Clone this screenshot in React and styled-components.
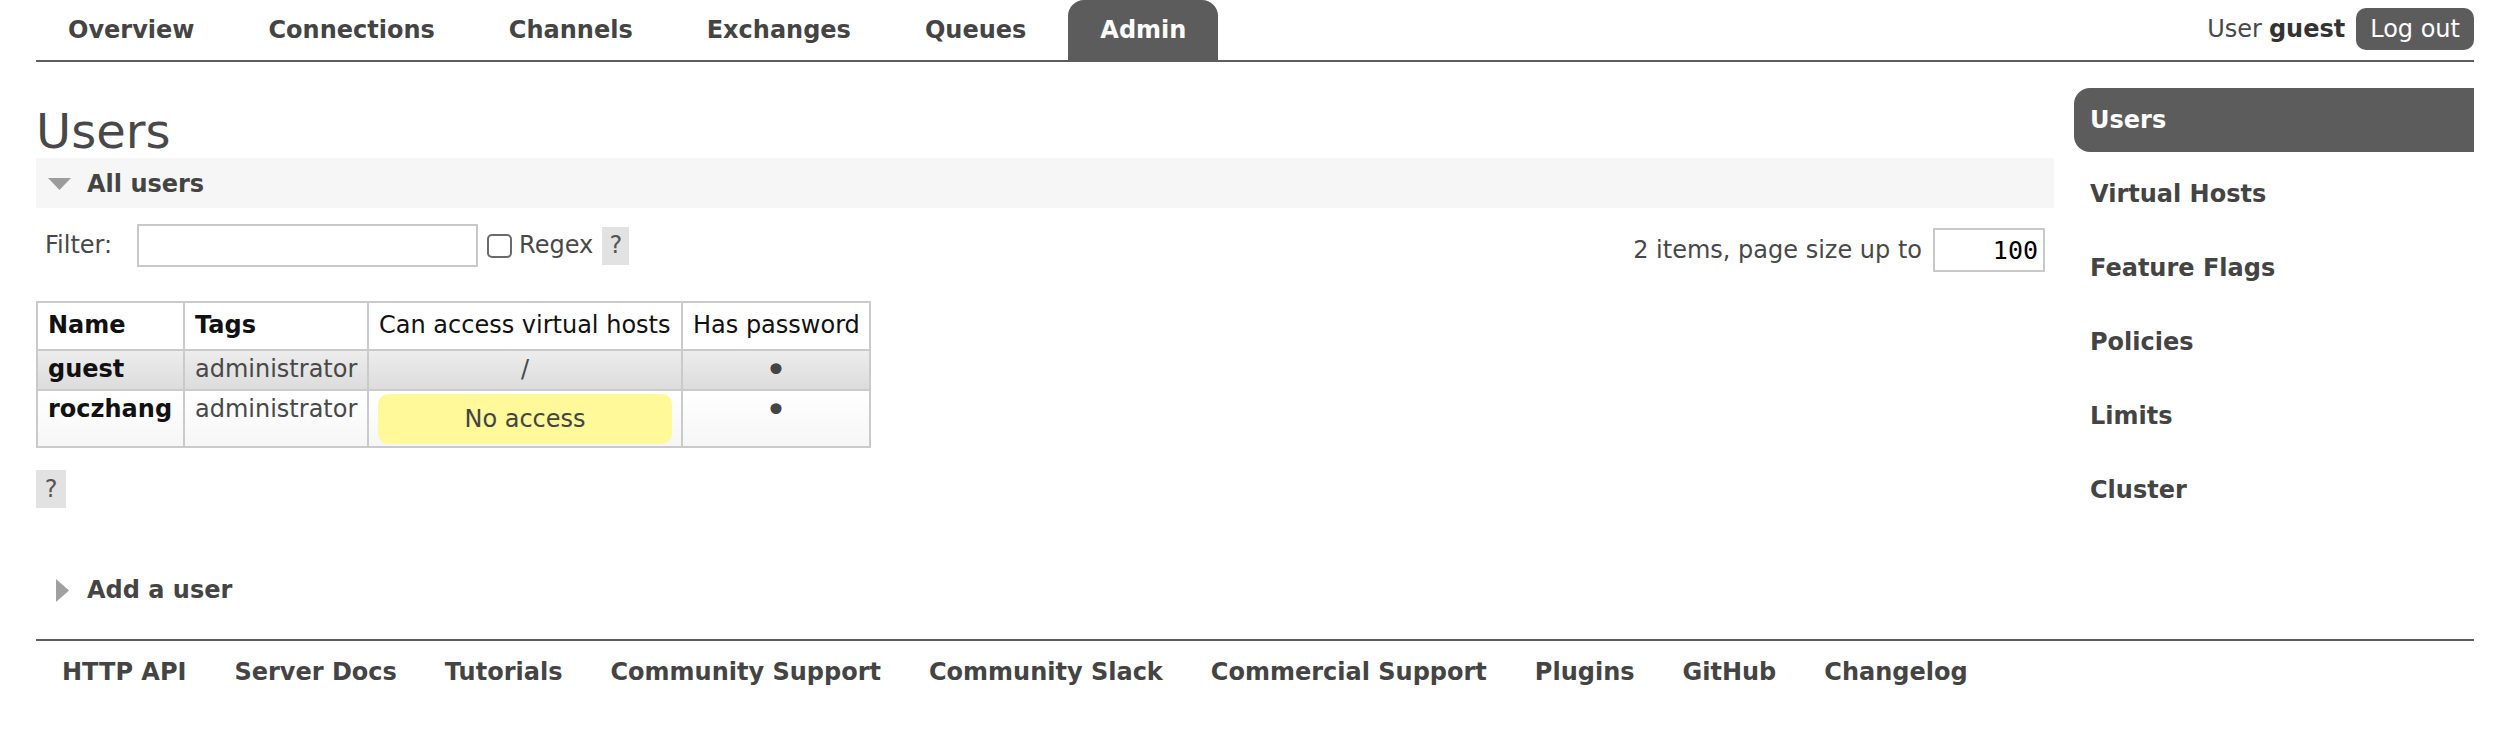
import styled, { createGlobalStyle } from "styled-components";

const GlobalStyle = createGlobalStyle`
  body {
    margin: 0;
    background: #fff;
    color: #484848;
    font-family: "DejaVu Sans", Verdana, sans-serif;
    font-size: 24px;
    line-height: 29px;
  }
`;

const Outer = styled.div`
  padding: 0 20px 0 36px;
`;

const Header = styled.header`
  display: flex;
  justify-content: space-between;
  height: 60px;
  border-bottom: 2px solid #5c5c5c;
`;

const Menu = styled.ul`
  display: flex;
  gap: 10px;
  list-style: none;
  margin: 0;
  padding: 0;
`;

const Tab = styled.li`
  display: flex;
  align-items: center;
  height: 60px;
  padding: 0 32px;
  font-weight: bold;
  border-radius: 16px 16px 0 0;
  color: ${(p) => (p.$selected ? "#fff" : "#444")};
  background: ${(p) => (p.$selected ? "#5c5c5c" : "transparent")};
`;

const UserBox = styled.div`
  display: flex;
  align-items: center;
  align-self: flex-start;
  height: 42px;
  margin-top: 8px;
  b {
    color: #333;
    margin-left: 7px;
  }
`;

const LogOut = styled.button`
  height: 42px;
  margin-left: 11px;
  padding: 0 14px;
  border: none;
  border-radius: 10px;
  background: #5c5c5c;
  color: #fff;
  font: inherit;
`;

const Columns = styled.div`
  display: flex;
`;

const Main = styled.main`
  flex: 1;
  min-width: 0;
`;

const Title = styled.h1`
  margin: 42px 0 0;
  font-size: 48px;
  line-height: 54px;
  font-weight: normal;
  color: #484848;
`;

const SectionTitle = styled.h2`
  display: flex;
  align-items: center;
  margin: ${(p) => (p.$open ? "0" : "56px 0 25px")};
  padding: 11px 10px 9px ${(p) => (p.$open ? "12px" : "20px")};
  font-size: 24px;
  line-height: 30px;
  font-weight: bold;
  color: #444;
  background: ${(p) => (p.$open ? "#f6f6f6" : "transparent")};
  svg {
    flex: none;
    margin-right: ${(p) => (p.$open ? "16px" : "18px")};
  }
`;

const FilterBar = styled.div`
  display: flex;
  justify-content: space-between;
  height: 48px;
  margin-top: 16px;
  padding: 0 9px 0 9px;
`;

const FilterLeft = styled.div`
  display: flex;
  align-items: center;
  align-self: flex-start;
  height: 43px;
`;

const FilterRight = styled.div`
  display: flex;
  align-items: center;
  align-self: flex-end;
  height: 44px;
`;

const TextInput = styled.input`
  box-sizing: border-box;
  width: ${(p) => p.$w}px;
  height: ${(p) => p.$h}px;
  margin-left: ${(p) => p.$ml}px;
  padding: 0 5px;
  border: 2px solid #c9c9c9;
  background: #fff;
  color: #000;
  font-family: "DejaVu Sans Mono", monospace;
  font-size: 25px;
  text-align: ${(p) => p.$align || "left"};
  outline: none;
`;

const Check = styled.input`
  appearance: none;
  box-sizing: border-box;
  width: 25px;
  height: 24px;
  margin: 0 0 0 9px;
  border: 2px solid #6a6a6a;
  border-radius: 5px;
  background: #fff;
`;

const RegexLabel = styled.span`
  margin-left: 7px;
`;

const Help = styled.span`
  display: inline-flex;
  align-items: center;
  justify-content: center;
  width: ${(p) => p.$w || 27}px;
  height: 38px;
  margin-left: ${(p) => p.$ml || 0}px;
  background: #e2e2e2;
  color: #555;
`;

const HelpRow = styled.div`
  margin-top: 22px;
`;

const Table = styled.table`
  table-layout: fixed;
  width: 833px;
  margin-top: 29px;
  border-collapse: collapse;
`;

const Col = styled.col`
  width: ${(p) => p.$w}px;
`;

const Th = styled.th`
  padding: 8px 10px 9px;
  border: 2px solid #cacaca;
  text-align: left;
  vertical-align: middle;
  white-space: nowrap;
  font-weight: ${(p) => (p.$bold ? "bold" : "normal")};
  color: #111;
`;

const Row = styled.tr`
  background: ${(p) =>
    p.$alt
      ? "linear-gradient(#ffffff, #f6f6f6)"
      : "linear-gradient(#ededed, #dcdcdc)"};
`;

const Td = styled.td`
  padding: ${(p) => (p.$tight ? "3px 9px 2px" : "4px 10px 5px")};
  border: 2px solid #cacaca;
  vertical-align: top;
  white-space: nowrap;
  text-align: ${(p) => (p.$center ? "center" : "left")};
  font-weight: ${(p) => (p.$bold ? "bold" : "normal")};
  color: ${(p) => (p.$bold ? "#111" : "#484848")};
`;

const Dot = styled.span`
  font-size: 38px;
  line-height: 0;
  vertical-align: -6px;
  color: #444;
`;

const NoAccess = styled.div`
  height: 50px;
  border-radius: 10px;
  background: #fff99a;
  color: #444;
  line-height: 50px;
  text-align: center;
`;

const Rhs = styled.aside`
  width: 400px;
  margin-left: 20px;
  padding-top: 26px;
`;

const SideList = styled.ul`
  list-style: none;
  margin: 0;
  padding: 0;
`;

const SideItem = styled.li`
  display: flex;
  align-items: center;
  height: 64px;
  margin-bottom: 10px;
  padding: 0 16px;
  font-weight: bold;
  color: ${(p) => (p.$selected ? "#fff" : "#444")};
  background: ${(p) => (p.$selected ? "#5c5c5c" : "transparent")};
  border-radius: 16px 0 0 16px;
`;

const Footer = styled.footer`
  border-top: 2px solid #5c5c5c;
`;

const FooterList = styled.ul`
  display: flex;
  list-style: none;
  margin: 0;
  padding: 0 0 0 2px;
`;

const FooterLink = styled.li`
  padding: 17px 24px;
  font-weight: bold;
  color: #444;
`;

const tabs = ["Overview", "Connections", "Channels", "Exchanges", "Queues", "Admin"];
const sideLinks = ["Users", "Virtual Hosts", "Feature Flags", "Policies", "Limits", "Cluster"];
const footerLinks = [
  "HTTP API",
  "Server Docs",
  "Tutorials",
  "Community Support",
  "Community Slack",
  "Commercial Support",
  "Plugins",
  "GitHub",
  "Changelog",
];

const users = [
  { name: "guest", tags: "administrator", vhosts: "/" },
  { name: "roczhang", tags: "administrator", vhosts: null },
];

function Arrow({ open }) {
  return open ? (
    <svg width="23" height="12" viewBox="0 0 23 12">
      <path d="M0 0 H23 L11.5 12 Z" fill="#9c9c9c" />
    </svg>
  ) : (
    <svg width="13" height="23" viewBox="0 0 13 23">
      <path d="M0 0 L13 11.5 L0 23 Z" fill="#a0a0a0" />
    </svg>
  );
}

export default function App() {
  return (
    <Outer>
      <GlobalStyle />
      <Header>
        <Menu>
          {tabs.map((t) => (
            <Tab key={t} $selected={t === "Admin"}>
              {t}
            </Tab>
          ))}
        </Menu>
        <UserBox>
          User<b>guest</b>
          <LogOut type="button">Log out</LogOut>
        </UserBox>
      </Header>

      <Columns>
        <Main>
          <Title>Users</Title>
          <SectionTitle $open>
            <Arrow open />
            All users
          </SectionTitle>

          <FilterBar>
            <FilterLeft>
              Filter:
              <TextInput $w={341} $h={43} $ml={25} />
              <Check type="checkbox" />
              <RegexLabel>Regex</RegexLabel>
              <Help $ml={9}>?</Help>
            </FilterLeft>
            <FilterRight>
              2 items, page size up to
              <TextInput $w={112} $h={44} $ml={11} $align="right" defaultValue="100" />
            </FilterRight>
          </FilterBar>

          <Table>
            <colgroup>
              <Col $w={147} />
              <Col $w={184} />
              <Col $w={314} />
              <Col $w={188} />
            </colgroup>
            <thead>
              <tr>
                <Th $bold>Name</Th>
                <Th $bold>Tags</Th>
                <Th>Can access virtual hosts</Th>
                <Th>Has password</Th>
              </tr>
            </thead>
            <tbody>
              {users.map((u, i) => (
                <Row key={u.name} $alt={i % 2 === 1}>
                  <Td $bold>{u.name}</Td>
                  <Td>{u.tags}</Td>
                  {u.vhosts ? (
                    <Td $center>{u.vhosts}</Td>
                  ) : (
                    <Td $tight>
                      <NoAccess>No access</NoAccess>
                    </Td>
                  )}
                  <Td $center>
                    <Dot>•</Dot>
                  </Td>
                </Row>
              ))}
            </tbody>
          </Table>

          <HelpRow>
            <Help $w={30}>?</Help>
          </HelpRow>

          <SectionTitle>
            <Arrow />
            Add a user
          </SectionTitle>
        </Main>

        <Rhs>
          <SideList>
            {sideLinks.map((l) => (
              <SideItem key={l} $selected={l === "Users"}>
                {l}
              </SideItem>
            ))}
          </SideList>
        </Rhs>
      </Columns>

      <Footer>
        <FooterList>
          {footerLinks.map((l) => (
            <FooterLink key={l}>{l}</FooterLink>
          ))}
        </FooterList>
      </Footer>
    </Outer>
  );
}
